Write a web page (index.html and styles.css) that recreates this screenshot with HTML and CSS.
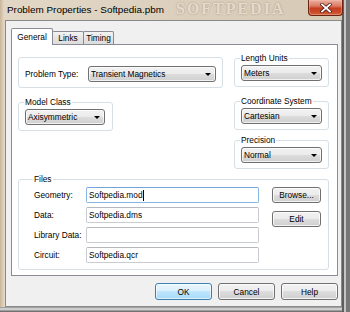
FILE: index.html
```html
<!DOCTYPE html>
<html>
<head>
<meta charset="utf-8">
<link rel="stylesheet" href="styles.css">
</head>
<body>
<div class="window">
  <span class="watermark">SOFTPEDIA</span>
  <div class="titlebar">
    <span class="title">Problem Properties - Softpedia.pbm</span>
    <div class="close">
      <svg width="12" height="10" viewBox="0 0 12 10">
        <path d="M2 1.5 L10 8.5 M10 1.5 L2 8.5" stroke="#4a1a12" stroke-width="3.4" stroke-linecap="square" fill="none"/>
        <path d="M2 1.5 L10 8.5 M10 1.5 L2 8.5" stroke="#ffffff" stroke-width="1.8" stroke-linecap="square" fill="none"/>
      </svg>
    </div>
  </div>
  <div class="client">
    <div class="tabs">
      <div class="tab active">General</div>
      <div class="tab">Links</div>
      <div class="tab">Timing</div>
    </div>
    <div class="panel">
      <div class="top">
        <div class="col-left">
          <fieldset class="grp grp-ptype">
            <span class="lbl">Problem Type:</span>
            <div class="combo combo-ptype"><span>Transient Magnetics</span><i class="arrow"></i></div>
          </fieldset>
          <fieldset class="grp grp-model">
            <legend>Model Class</legend>
            <div class="combo combo-model"><span>Axisymmetric</span><i class="arrow"></i></div>
          </fieldset>
        </div>
        <div class="col-right">
          <fieldset class="grp grp-r">
            <legend>Length Units</legend>
            <div class="combo combo-r"><span>Meters</span><i class="arrow"></i></div>
          </fieldset>
          <fieldset class="grp grp-r grp-coord">
            <legend>Coordinate System</legend>
            <div class="combo combo-r"><span>Cartesian</span><i class="arrow"></i></div>
          </fieldset>
          <fieldset class="grp grp-r grp-prec">
            <legend>Precision</legend>
            <div class="combo combo-r"><span>Normal</span><i class="arrow"></i></div>
          </fieldset>
        </div>
      </div>
      <fieldset class="grp files">
        <legend>Files</legend>
        <div class="files-grid">
          <span class="flabel">Geometry:</span>
          <div class="field focus">Softpedia.mod<span class="caret"></span></div>
          <div class="btn btn-browse">Browse...</div>
          <span class="flabel">Data:</span>
          <div class="field">Softpedia.dms</div>
          <div class="btn btn-edit">Edit</div>
          <span class="flabel">Library Data:</span>
          <div class="field"></div>
          <span></span>
          <span class="flabel">Circuit:</span>
          <div class="field">Softpedia.qcr</div>
          <span></span>
        </div>
      </fieldset>
    </div>
    <div class="buttons">
      <div class="btn btn-dlg btn-default">OK</div>
      <div class="btn btn-dlg">Cancel</div>
      <div class="btn btn-dlg">Help</div>
    </div>
  </div>
</div>
</body>
</html>
```
FILE: styles.css
```css
* { box-sizing: border-box; }
body {
  margin: 0;
  font-family: "Liberation Sans", Arial, sans-serif;
  font-size: 8.3px;
  color: #000;
}
.window {
  width: 350px;
  height: 312px;
  position: relative;
  overflow: hidden;
  background:
    linear-gradient(to right, rgba(0,0,0,0) 342px, #5e5e5e 342px, #5e5e5e 344px, #c4c4c4 344px, #c4c4c4 346px, #767676 346px),
    linear-gradient(to bottom, rgba(0,0,0,0) 307px, #8a8a8a 307px, #e4e4e4 309px, #5a5a5a 312px),
    linear-gradient(to right, #c9b598 0, #e2d6c4 4px, #ddd1bf 40%, #d6c9b4 100%);
}
.watermark {
  position: absolute;
  left: 176px;
  top: 1px;
  font-family: "Liberation Serif", serif;
  font-weight: bold;
  font-size: 16px;
  line-height: 16px;
  letter-spacing: 2px;
  color: rgba(245, 238, 226, 0.75);
  text-shadow: 0 0 2px rgba(120, 100, 80, 0.6);
  filter: blur(0.7px);
}
.titlebar {
  height: 20px;
  display: flex;
  align-items: flex-start;
  position: relative;
}
.title {
  font-size: 9.9px;
  line-height: 11px;
  margin: 4px 0 0 7px;
}
.close {
  margin-left: auto;
  margin-right: 7px;
  width: 35px;
  height: 16px;
  border: 1px solid #6a2414;
  border-top: none;
  border-radius: 0 0 4px 4px;
  background: linear-gradient(to bottom, #eab0a2 0, #dc7a62 40%, #c63e22 55%, #c84a2a 80%, #d7663f 100%);
  box-shadow: inset 0 0 0 1px rgba(255, 200, 180, 0.35);
  display: flex;
  align-items: center;
  justify-content: center;
}
.client {
  margin-left: 5px;
  width: 337px;
  height: 287px;
  border: 1px solid #8a8a8a;
  background: #f0f0f0;
  padding: 7px 3px 6px 5px;
}
.tabs {
  display: flex;
  align-items: flex-end;
  height: 16px;
}
.tab {
  height: 13px;
  border: 1px solid #898c95;
  border-bottom: none;
  border-radius: 2px 2px 0 0;
  background: linear-gradient(to bottom, #f3f3f3, #e5e5e5 50%, #dcdcdc 100%);
  display: flex;
  align-items: center;
  justify-content: center;
  margin-left: -1px;
  width: 32px;
}
.tab:last-child { width: 31px; }
.tab.active {
  margin-left: 0;
  width: 42px;
  height: 17px;
  margin-bottom: -1px;
  background: #fff;
  position: relative;
  z-index: 1;
  padding-bottom: 1px;
}
.panel {
  width: 327px;
  height: 232px;
  border: 1px solid #898c95;
  background: #fff;
  padding: 8px 8px 0 6px;
}
.top {
  display: flex;
  align-items: flex-start;
  gap: 11px;
}
.col-left {
  width: 205px;
  margin-top: 4px;
  display: flex;
  flex-direction: column;
  align-items: flex-start;
}
.col-right {
  width: 95px;
  display: flex;
  flex-direction: column;
}
.grp {
  margin: 0;
  min-width: 0;
  border: 1px solid #d5dfe5;
  border-radius: 3px;
}
legend {
  padding: 0 1px;
  line-height: 10px;
  margin-left: -1px;
}
.grp-ptype {
  width: 205px;
  padding: 8px 6px 5px 6px;
  display: flex;
  align-items: center;
  justify-content: space-between;
}
.grp-model {
  width: 95px;
  margin-top: 9px;
  padding: 2px 6px 5px 6px;
}
.grp-r {
  width: 95px;
  padding: 2px 6px 5px 6px;
}
.grp-coord { margin-top: 9px; }
.grp-prec { margin-top: 5px; }
.combo {
  height: 16px;
  border: 1px solid #707070;
  border-radius: 3px;
  background: linear-gradient(to bottom, #f2f2f2 0, #ebebeb 50%, #dddddd 50%, #cfcfcf 100%);
  box-shadow: inset 0 0 0 1px rgba(255,255,255,0.7);
  display: flex;
  align-items: center;
  padding: 0 4px 0 2px;
  white-space: nowrap;
}
.combo-ptype { width: 128px; }
.combo-model { width: 80px; }
.combo-r { width: 81px; }
.arrow {
  margin-left: auto;
  width: 0;
  height: 0;
  border-left: 3px solid transparent;
  border-right: 3px solid transparent;
  border-top: 3px solid #000;
}
.files {
  width: 311px;
  margin-top: 5px;
  padding: 3px 7px 6px 15px;
}
.files-grid {
  display: grid;
  grid-template-columns: 52px 173px 62px;
  grid-auto-rows: 16px;
  row-gap: 4px;
  align-items: center;
}
.flabel { white-space: nowrap; }
.field {
  height: 16px;
  border: 1px solid #c9ccd1;
  border-top-color: #b4b7bc;
  border-radius: 2px;
  background: #fff;
  padding: 0 2px;
  display: flex;
  align-items: center;
  white-space: nowrap;
}
.field.focus {
  border-color: #86b6e4;
  border-top-color: #6ea4d8;
}
.caret {
  display: inline-block;
  width: 1px;
  height: 11px;
  background: #000;
}
.btn {
  border: 1px solid #707070;
  border-radius: 3px;
  background: linear-gradient(to bottom, #f2f2f2 0, #ebebeb 50%, #dddddd 50%, #cfcfcf 100%);
  box-shadow: inset 0 0 0 1px rgba(255,255,255,0.75);
  display: flex;
  align-items: center;
  justify-content: center;
  white-space: nowrap;
}
.btn-browse, .btn-edit {
  width: 49px;
  height: 16px;
  justify-self: end;
}
.btn-edit { align-self: start; margin-top: 4px; }
.buttons {
  display: flex;
  justify-content: flex-end;
  gap: 6px;
  margin-top: 7px;
}
.btn-dlg {
  width: 57px;
  height: 17px;
}
.btn-default {
  border-color: #3c7fb1;
  background: linear-gradient(to bottom, #eaf6fd 0, #d9f0fc 50%, #bee6fd 50%, #a7d9f5 100%);
  box-shadow: inset 0 0 0 1px rgba(255,255,255,0.6);
}
```
